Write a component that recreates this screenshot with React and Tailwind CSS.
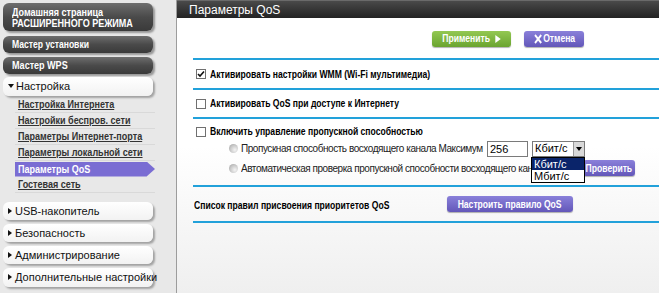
import React from "react";

const F = "font-['Liberation_Sans',Arial,sans-serif]";

function Nw({ children, className = "" }) {
  return (
    <span className={`inline-block whitespace-nowrap scale-x-[0.82] origin-left ${className}`}>
      {children}
    </span>
  );
}

function Nl({ children, className = "" }) {
  return (
    <span className={`inline-block whitespace-nowrap scale-x-[0.78] origin-left ${className}`}>
      {children}
    </span>
  );
}

function BtnInner({ children }) {
  return (
    <div className="flex items-center whitespace-nowrap shrink-0 scale-x-[0.78] origin-center">
      {children}
    </div>
  );
}

function DarkBtn({ children, className = "" }) {
  return (
    <div
      className={`w-[150px] rounded-[6px] bg-gradient-to-b from-[#6e6e6e] via-[#4a4a4a] to-[#3a3a3a] text-white font-bold text-[11px] leading-[11px] pl-[9px] shadow-[2px_2px_2px_rgba(0,0,0,0.35)] whitespace-nowrap ${className}`}
    >
      {children}
    </div>
  );
}

function WhiteBtn({ children, className = "" }) {
  return (
    <div
      className={`w-[150px] h-[18px] rounded-[6px] bg-gradient-to-b from-white to-[#f2f2f2] text-[#111] text-[11px] flex items-center pl-[5px] shadow-[2px_2px_2px_rgba(0,0,0,0.3)] whitespace-nowrap ${className}`}
    >
      {children}
    </div>
  );
}

function Tri({ down }) {
  return down ? (
    <span className="inline-block w-0 h-0 border-l-[3px] border-r-[3px] border-t-[4px] border-l-transparent border-r-transparent border-t-[#111] mr-[2px] mb-[1px]" />
  ) : (
    <span className="inline-block w-0 h-0 border-t-[3px] border-b-[3px] border-l-[4px] border-t-transparent border-b-transparent border-l-[#111] mr-[3px] mb-[1px]" />
  );
}

function SubItem({ children, active }) {
  if (active) {
    return (
      <div className="h-[16px] flex items-center">
        <div className="h-[15px] w-[141px] bg-[#7a6dd3] text-white text-[11px] font-bold flex items-center pl-[3px] [clip-path:polygon(0_0,94%_0,100%_50%,94%_100%,0_100%)]">
          <Nw>{children}</Nw>
        </div>
      </div>
    );
  }
  return (
    <div className="h-[16px] flex items-center border-b border-[#d9d9d9] pl-[3px]">
      <Nw className="text-[#333] text-[11px] font-bold underline underline-offset-[1px]">{children}</Nw>
    </div>
  );
}

function Checkbox({ checked }) {
  return (
    <div className="w-[10px] h-[10px] border border-[#707070] bg-white flex items-center justify-center shrink-0">
      {checked && (
        <svg width="8" height="8" viewBox="0 0 8 8">
          <path d="M1 4 L3 6 L7 1.5" stroke="#111" strokeWidth="1.6" fill="none" />
        </svg>
      )}
    </div>
  );
}

function Radio() {
  return (
    <div className="w-[9px] h-[9px] rounded-full bg-[radial-gradient(circle_at_65%_65%,#f4f4f4,#c4c4c4_60%,#9a9a9a)] shrink-0" />
  );
}

function Line() {
  return <div className="h-[2px] bg-[#22a1da]" />;
}

function Label({ children }) {
  return <Nl className="text-[11px] font-bold text-black">{children}</Nl>;
}

function PurpleBtn({ children, className = "" }) {
  return (
    <div
      className={`h-[16px] rounded-[3px] bg-gradient-to-b from-[#8a80da] to-[#6357b9] text-white text-[11px] font-bold flex items-center justify-center shadow-[0_1px_1px_rgba(0,0,0,0.3)] shrink-0 ${className}`}
    >
      {children}
    </div>
  );
}

export default function App() {
  return (
    <div className={`flex w-[659px] h-[293px] overflow-hidden ${F}`}>
      <aside className="w-[177px] shrink-0 bg-[#e8e8e8] border-r border-[#9c9c9c] pl-[3px] pt-[3px]">
        <DarkBtn className="h-[28px] pt-[4px]">
          <Nw>Домашняя страница</Nw>
          <br />
          <Nw>РАСШИРЕННОГО РЕЖИМА</Nw>
        </DarkBtn>
        <DarkBtn className="h-[17px] mt-[5px] flex items-center">
          <Nl>Мастер установки</Nl>
        </DarkBtn>
        <DarkBtn className="h-[17px] mt-[4px] flex items-center">
          <Nw>Мастер WPS</Nw>
        </DarkBtn>
        <WhiteBtn className="mt-[3px] h-[19px]">
          <Tri down />
          Настройка
        </WhiteBtn>
        <div className="ml-[12px] w-[140px] mt-[1px]">
          <SubItem>Настройка Интернета</SubItem>
          <SubItem>Настройки беспров. сети</SubItem>
          <SubItem>Параметры Интернет-порта</SubItem>
          <SubItem>Параметры локальной сети</SubItem>
          <SubItem active>Параметры QoS</SubItem>
          <SubItem>Гостевая сеть</SubItem>
        </div>
        <div className="flex flex-col gap-[4px] mt-[9px]">
          <WhiteBtn>
            <Tri />
            USB-накопитель
          </WhiteBtn>
          <WhiteBtn>
            <Tri />
            Безопасность
          </WhiteBtn>
          <WhiteBtn>
            <Tri />
            Администрирование
          </WhiteBtn>
          <WhiteBtn className="h-[19px]">
            <Tri />
            Дополнительные настройки
          </WhiteBtn>
        </div>
      </aside>

      <main className="flex-1 flex flex-col bg-gradient-to-b from-white via-white to-[#efefef]">
        <header className="h-[18px] shrink-0 bg-gradient-to-b from-[#4a4a4a] to-[#232323] border-t border-[#6a6a6a] flex items-center pl-[12px] text-white text-[12px]">
          Параметры QoS
        </header>
        <div className="pl-[16px]">
          <div className="h-[40px] flex items-center pl-[239px] gap-[13px] pt-[1px]">
            <div className="w-[79px] h-[16px] rounded-[3px] bg-gradient-to-b from-[#93c852] to-[#6aa42f] text-white text-[11px] font-bold flex items-center justify-center shadow-[0_1px_1px_rgba(0,0,0,0.3)]">
              <BtnInner>
                <span>Применить</span>
                <span className="inline-block ml-[7px] w-0 h-0 border-t-[4px] border-b-[4px] border-l-[7px] border-t-transparent border-b-transparent border-l-white" />
              </BtnInner>
            </div>
            <PurpleBtn className="w-[60px]">
              <BtnInner>
                <svg width="11" height="10" viewBox="0 0 11 10" className="mr-[1px] shrink-0">
                  <path d="M1.5 1 L9.5 9 M9.5 1 L1.5 9" stroke="white" strokeWidth="2.4" />
                </svg>
                <span>Отмена</span>
              </BtnInner>
            </PurpleBtn>
          </div>
          <Line />
          <div className="h-[28px] flex items-center gap-[4px] pl-[3px]">
            <Checkbox checked />
            <Label>Активировать настройки WMM (Wi-Fi мультимедиа)</Label>
          </div>
          <Line />
          <div className="h-[27px] flex items-center gap-[4px] pl-[3px]">
            <Checkbox />
            <Label>Активировать QoS при доступе к Интернету</Label>
          </div>
          <Line />
          <div className="h-[66px] flex flex-col">
            <div className="h-[20px] flex items-center gap-[4px] pl-[3px] pt-[5px]">
              <Checkbox />
              <Label>Включить управление пропускной способностью</Label>
            </div>
            <div className="h-[19px] flex items-center pl-[36px] gap-[3px] text-[10px] text-[#222] tracking-[-0.45px]">
              <Radio />
              <span className="w-[243px] whitespace-nowrap overflow-hidden">Пропускная способность восходящего канала Максимум</span>
              <div className="w-[41px] h-[16px] border border-[#7a7a7a] bg-white text-[11px] leading-[14px] pl-[2px] text-black tracking-normal">
                256
              </div>
              <div className="relative ml-[1px]">
                <div className="w-[53px] h-[16px] border border-[#7a7a7a] bg-white flex items-center text-[11px] text-black tracking-normal">
                  <span className="flex-1 pl-[2px]">Кбит/с</span>
                  <div className="w-[11px] h-[14px] bg-[#d8d8d8] border-l border-[#999] flex items-center justify-center">
                    <span className="inline-block w-0 h-0 border-l-[3px] border-r-[3px] border-t-[4px] border-l-transparent border-r-transparent border-t-black" />
                  </div>
                </div>
                <div className="absolute left-[-1px] top-[16px] w-[54px] border border-black bg-white z-10 text-[11px] leading-[12px] tracking-normal">
                  <div className="bg-[#0a246a] text-white pl-[2px]">Кбит/с</div>
                  <div className="text-black pl-[2px]">Мбит/с</div>
                </div>
              </div>
            </div>
            <div className="h-[20px] flex items-center pl-[36px] gap-[3px] text-[10px] text-[#222] tracking-[-0.45px]">
              <Radio />
              <span className="w-[339px] whitespace-nowrap overflow-hidden">Автоматическая проверка пропускной способности восходящего канала</span>
              <PurpleBtn className="w-[52px] tracking-normal">
                <BtnInner>Проверить</BtnInner>
              </PurpleBtn>
            </div>
          </div>
          <Line />
          <div className="h-[34px] flex items-center pl-[1px]">
            <div className="w-[253px]">
              <Label>Список правил присвоения приоритетов QoS</Label>
            </div>
            <PurpleBtn className="w-[126px]">
              <BtnInner>Настроить правило QoS</BtnInner>
            </PurpleBtn>
          </div>
          <Line />
        </div>
      </main>
    </div>
  );
}
